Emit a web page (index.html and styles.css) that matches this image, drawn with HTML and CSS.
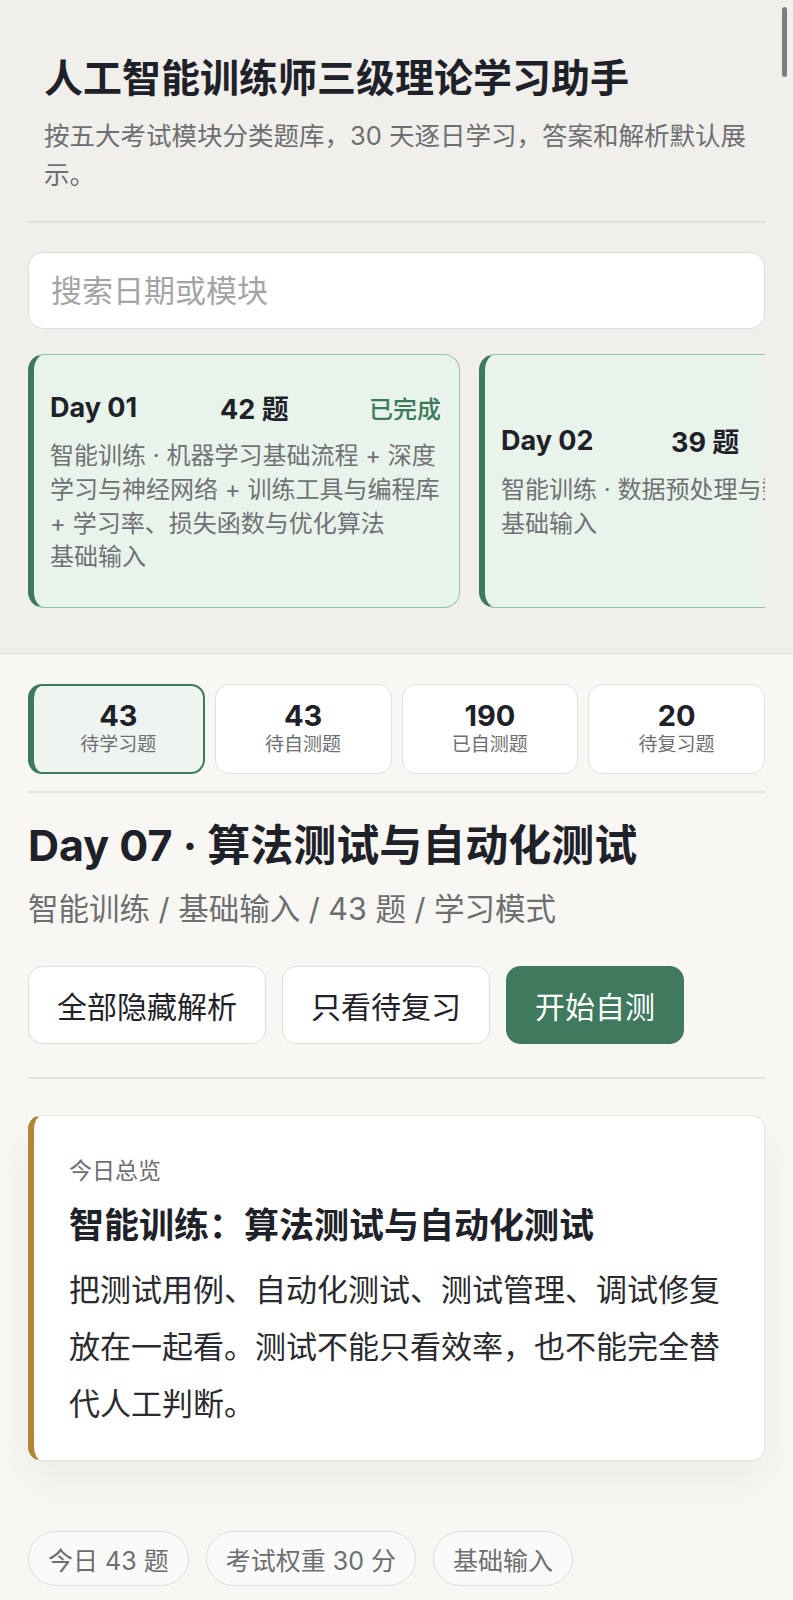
FILE: index.html
```html
<!DOCTYPE html>
<html lang="zh-CN">
<head>
  <meta charset="UTF-8">
  <meta name="viewport" content="width=device-width, initial-scale=1.0">
  <title>人工智能训练师三级理论学习助手</title>
  <link rel="stylesheet" href="styles.css">
</head>
<body>

  <div class="top">
    <header class="intro">
      <h1>人工智能训练师三级理论学习助手</h1>
      <p>按五大考试模块分类题库，30 天逐日学习，答案和解析默认展示。</p>
    </header>

    <input type="text" class="search" placeholder="搜索日期或模块">

    <!-- 每日卡片 -->
    <div class="days">
      <div class="day">
        <div class="day-head">
          <span class="day-no">Day 01</span>
          <span class="day-count">42 题</span>
          <span class="day-state">已完成</span>
        </div>
        <p class="day-desc">智能训练 · 机器学习基础流程 + 深度学习与神经网络 + 训练工具与编程库 + 学习率、损失函数与优化算法</p>
        <p class="day-desc">基础输入</p>
      </div>
      <div class="day">
        <div class="day-head">
          <span class="day-no">Day 02</span>
          <span class="day-count">39 题</span>
        </div>
        <p class="day-desc">智能训练 · 数据预处理与数据清洗</p>
        <p class="day-desc">基础输入</p>
      </div>
      <div class="day">
        <div class="day-head">
          <span class="day-no">Day 03</span>
          <span class="day-count">40 题</span>
        </div>
        <p class="day-desc">智能训练 · 模型训练与调优</p>
        <p class="day-desc">基础输入</p>
      </div>
    </div>
  </div>

  <main class="content">
    <div class="stats">
      <div class="stat active"><b>43</b><span>待学习题</span></div>
      <div class="stat"><b>43</b><span>待自测题</span></div>
      <div class="stat"><b>190</b><span>已自测题</span></div>
      <div class="stat"><b>20</b><span>待复习题</span></div>
    </div>

    <section class="today">
      <h2>Day 07 · 算法测试与自动化测试</h2>
      <p class="meta">智能训练 / 基础输入 / 43 题 / 学习模式</p>
      <div class="actions">
        <button class="btn">全部隐藏解析</button>
        <button class="btn">只看待复习</button>
        <button class="btn primary">开始自测</button>
      </div>
    </section>

    <div class="overview">
      <div class="overview-label">今日总览</div>
      <h3>智能训练：算法测试与自动化测试</h3>
      <p>把测试用例、自动化测试、测试管理、调试修复放在一起看。测试不能只看效率，也不能完全替代人工判断。</p>
    </div>

    <div class="chips">
      <span class="chip">今日 43 题</span>
      <span class="chip">考试权重 30 分</span>
      <span class="chip">基础输入</span>
    </div>
  </main>

  <div class="scrollbar"></div>

</body>
</html>
```

FILE: styles.css
```css
body {
  margin: 0;
  font-family: Inter, "Noto Sans CJK SC", sans-serif;
  background: #f8f7f4;
  color: #1f2128;
}
/* 顶部区域 */
.top {
  background: #f0efeb;
  padding: 0 28px 45px;
  border-bottom: 1.5px solid #dcdad5;
}
.intro {
  padding: 54px 16px 27px;
  border-bottom: 2px solid #e0ded9;
}
.intro h1 {
  margin: 0;
  font-size: 39px;
  line-height: 48px;
  font-weight: 700;
}
.intro p {
  margin: 14px 0 0;
  font-size: 25.5px;
  line-height: 39px;
  color: #6d6e70;
}
.search {
  display: block;
  box-sizing: border-box;
  width: 100%;
  height: 77px;
  margin-top: 29px;
  padding: 0 22px;
  border: 1.5px solid #dcdcdc;
  border-radius: 15px;
  background: #fff;
  font: 31px Inter, "Noto Sans CJK SC", sans-serif;
  color: #1f2128;
}
.search::placeholder {
  color: #a4a4a4;
}
.days {
  display: flex;
  gap: 19px;
  margin-top: 25px;
  overflow: hidden;
}
.day {
  flex: 0 0 432px;
  box-sizing: border-box;
  height: 254px;
  display: flex;
  flex-direction: column;
  justify-content: center;
  padding: 0 18px 0 16px;
  background: #e8f4eb;
  border: 1.5px solid #94c3a5;
  border-left: 6px solid #3d7a5c;
  border-radius: 16px;
}
.day-head {
  display: flex;
  align-items: center;
  height: 38px;
  margin-bottom: 13px;
  font-size: 27px;
  font-weight: 700;
}
.day-no {
  width: 170px;
}
.day-state {
  margin-left: auto;
  font-size: 24px;
  font-weight: 500;
  color: #3d7a5c;
}
.day-desc {
  margin: 0;
  font-size: 24px;
  line-height: 33.7px;
  color: #707174;
}
/* 主内容 */
.content {
  padding: 30px 28px 40px;
}
.stats {
  display: grid;
  grid-template-columns: repeat(4, 1fr);
  gap: 10px;
  padding-bottom: 17px;
  border-bottom: 2px solid #e3e2de;
}
.stat {
  box-sizing: border-box;
  height: 90px;
  display: flex;
  flex-direction: column;
  align-items: center;
  justify-content: center;
  background: #fff;
  border: 1.5px solid #dfdfdf;
  border-radius: 14px;
}
.stat b {
  font-size: 29px;
  line-height: 32px;
  font-weight: 700;
}
.stat span {
  font-size: 19px;
  line-height: 26px;
  color: #6d6e70;
}
.stat.active {
  background: #eef4f0;
  border: 2px solid #3d7a5c;
  border-left: 6px solid #3d7a5c;
}
.today {
  padding: 26px 0 33px;
  border-bottom: 2px solid #e3e2de;
}
.today h2 {
  margin: 0;
  font-size: 43px;
  line-height: 52px;
  font-weight: 700;
}
.meta {
  margin: 18px 0 0;
  font-size: 30.5px;
  line-height: 40px;
  color: #6d6e70;
}
.actions {
  display: flex;
  gap: 16px;
  margin-top: 37px;
}
.btn {
  height: 78px;
  padding: 0 28px;
  border: 1.5px solid #dcdcdc;
  border-radius: 14px;
  background: #fff;
  font: 30px Inter, "Noto Sans CJK SC", sans-serif;
  color: #1f2128;
}
.btn.primary {
  background: #3f7a5f;
  border-color: #3f7a5f;
  color: #fff;
}
.overview {
  margin-top: 36px;
  padding: 40px 36px 28px 35px;
  background: #fff;
  border: 1px solid #e2e2e2;
  border-left: 6px solid #b5823a;
  border-radius: 14px;
  box-shadow: 0 20px 40px rgba(0, 0, 0, 0.05);
}
.overview-label {
  font-size: 23px;
  line-height: 30px;
  color: #6d6e70;
}
.overview h3 {
  margin: 17px 0 0;
  font-size: 35px;
  line-height: 44px;
  font-weight: 700;
}
.overview p {
  margin: 14px 0 0;
  font-size: 31px;
  line-height: 57px;
  color: #2a2b2e;
}
.chips {
  display: flex;
  gap: 17px;
  margin-top: 70px;
}
.chip {
  height: 55px;
  box-sizing: border-box;
  display: flex;
  align-items: center;
  padding: 0 19px;
  border: 1.5px solid #dcdcdc;
  border-radius: 28px;
  background: #fafaf8;
  font-size: 25px;
  color: #6d6e70;
}
/* 滚动条 */
.scrollbar {
  position: fixed;
  top: 7px;
  right: 6px;
  width: 5px;
  height: 70px;
  border-radius: 3px;
  background: #7d7d7d;
}
```
